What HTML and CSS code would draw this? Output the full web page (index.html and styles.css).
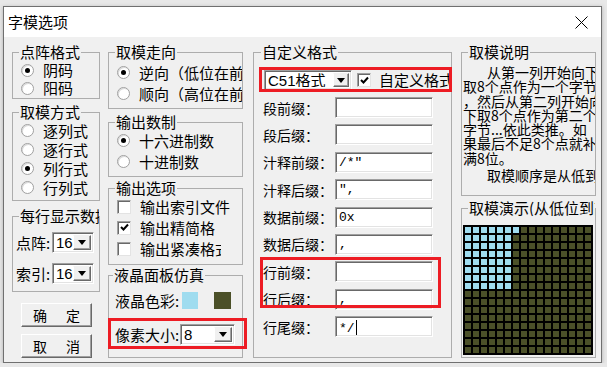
FILE: index.html
```html
<!DOCTYPE html>
<html lang="zh-CN">
<head>
    <meta charset="UTF-8">
    <meta name="viewport" content="width=device-width, initial-scale=1.0">
    <title>字模选项</title>
    <link rel="stylesheet" href="styles.css">
</head>
<body>

<div class="window">
    <div class="titlebar">
        <span class="title">字模选项</span>
        <svg class="close" width="13" height="13" viewBox="0 0 13 13">
            <path d="M0.5 0.5 L12.5 12.5 M12.5 0.5 L0.5 12.5" stroke="#000" stroke-width="1" fill="none"/>
        </svg>
    </div>

    <div class="client">

        <!-- left column -->
        <div class="col col1">
            <fieldset class="grp g-matrix">
                <legend>点阵格式</legend>
                <div class="opt"><span class="radio on"></span>阴码</div>
                <div class="opt"><span class="radio"></span>阳码</div>
            </fieldset>

            <fieldset class="grp g-mode">
                <legend>取模方式</legend>
                <div class="opt"><span class="radio"></span>逐列式</div>
                <div class="opt"><span class="radio"></span>逐行式</div>
                <div class="opt"><span class="radio on"></span>列行式</div>
                <div class="opt"><span class="radio"></span>行列式</div>
            </fieldset>

            <fieldset class="grp g-count">
                <legend class="clip">每行显示数据</legend>
                <div class="pick">
                    <span class="pick-label">点阵:</span>
                    <div class="combo c-num"><span class="val">16</span><span class="drop"></span></div>
                </div>
                <div class="pick">
                    <span class="pick-label">索引:</span>
                    <div class="combo c-num"><span class="val">16</span><span class="drop"></span></div>
                </div>
            </fieldset>

            <button class="btn btn-ok"><span>确</span><span>定</span></button>
            <button class="btn"><span>取</span><span>消</span></button>
        </div>

        <!-- second column -->
        <div class="col col2">
            <fieldset class="grp g-dir">
                <legend>取模走向</legend>
                <div class="opt cut-row"><span class="radio on"></span>逆向（低位在前）</div>
                <div class="opt cut-row"><span class="radio"></span>顺向（高位在前）</div>
            </fieldset>

            <fieldset class="grp g-base">
                <legend>输出数制</legend>
                <div class="opt"><span class="radio on"></span>十六进制数</div>
                <div class="opt"><span class="radio"></span>十进制数</div>
            </fieldset>

            <fieldset class="grp g-out">
                <legend>输出选项</legend>
                <div class="opt"><span class="check"></span>输出索引文件</div>
                <div class="opt"><span class="check on"><svg width="11" height="11" viewBox="0 0 11 11"><path d="M2 5 L4.5 7.5 L9 2.5" stroke="#000" stroke-width="2" fill="none"/></svg></span>输出精简格</div>
                <div class="opt"><span class="check"></span><span class="cut cut-compact">输出紧凑格式</span></div>
            </fieldset>

            <fieldset class="grp g-lcd">
                <legend>液晶面板仿真</legend>
                <div class="lcd-row">
                    <span class="lcd-label">液晶色彩:</span>
                    <span class="swatch sw-light"></span>
                    <span class="swatch sw-dark"></span>
                </div>
                <div class="lcd-row size-row mark mark-size">
                    <span class="size-label">像素大小:</span>
                    <div class="combo c-size"><span class="val">8</span><span class="drop"></span></div>
                </div>
            </fieldset>
        </div>

        <!-- custom format column -->
        <div class="col col3">
            <fieldset class="grp g-custom">
                <legend>自定义格式</legend>
                <div class="fmt-row mark mark-fmt">
                    <div class="combo c-fmt"><span class="val">C51格式</span><span class="drop"></span></div>
                    <span class="check on"><svg width="11" height="11" viewBox="0 0 11 11"><path d="M2 5 L4.5 7.5 L9 2.5" stroke="#000" stroke-width="2" fill="none"/></svg></span>
                    <span class="cut cut-custom">自定义格式</span>
                </div>

                <div class="fields">
                    <div class="frow"><span class="flabel">段前缀：</span><div class="field"></div></div>
                    <div class="frow"><span class="flabel">段后缀：</span><div class="field"></div></div>
                    <div class="frow"><span class="flabel">汁释前缀：</span><div class="field">/*"</div></div>
                    <div class="frow"><span class="flabel">汁释后缀：</span><div class="field">",</div></div>
                    <div class="frow"><span class="flabel">数据前缀：</span><div class="field">0x</div></div>
                    <div class="frow"><span class="flabel">数据后缀：</span><div class="field">,</div></div>
                    <div class="frow-pair mark mark-line">
                        <div class="frow"><span class="flabel">行前缀：</span><div class="field"></div></div>
                        <div class="frow"><span class="flabel">行后缀：</span><div class="field">,</div></div>
                    </div>
                    <div class="frow"><span class="flabel">行尾缀：</span><div class="field">*/<span class="caret"></span></div></div>
                </div>
            </fieldset>
        </div>

        <!-- right column -->
        <div class="col col4">
            <fieldset class="grp g-notes">
                <legend>取模说明</legend>
                <div class="notes">
                    <div class="ind">从第一列开始向下</div>
                    <div>取8个点作为一个字节</div>
                    <div>，然后从第二列开始向</div>
                    <div>下取8个点作为第二个</div>
                    <div>字节...依此类推。如</div>
                    <div>果最后不足8个点就补</div>
                    <div>满8位。</div>
                    <div class="ind p2">取模顺序是从低到高</div>
                </div>
            </fieldset>

            <fieldset class="grp g-demo">
                <legend class="clip">取模演示(从低位到高位)</legend>
                <div id="demoGrid" class="demo-grid"></div>
            </fieldset>
        </div>

    </div>
</div>

<script src="grid.js"></script>
</body>
</html>
```

FILE: styles.css
```css
* {
    box-sizing: border-box;
}
body {
    margin: 0;
    background: #e8e8e8;
    font-family: "Noto Sans CJK SC", "Liberation Sans", sans-serif;
    font-size: 15px;
    color: #000;
}

/* window frame */
.window {
    margin: 6px 0 0 3px;
    width: 599px;
    height: 357px;
    border: 1px solid #707070;
    background: #f0f0f0;
    display: flex;
    flex-direction: column;
    box-shadow: 0 1px 4px rgba(0, 0, 0, 0.25);
}
.titlebar {
    height: 30px;
    flex: none;
    background: #fff;
    display: flex;
    align-items: center;
    justify-content: space-between;
    padding: 0 13px 0 4px;
}
.title {
    font-size: 15px;
    line-height: 16px;
}
.close {
    display: block;
}
.client {
    flex: 1;
    display: flex;
    padding: 7px 0 5px 8px;
}
.col {
    display: flex;
    flex-direction: column;
}
.col1 {
    width: 88px;
    margin-right: 8px;
}
.col2 {
    width: 135px;
    margin-right: 10px;
}
.col3 {
    width: 199px;
    margin-right: 9px;
}
.col4 {
    width: 135px;
}

/* group boxes */
.grp {
    margin: 0;
    padding: 0 0 0 8px;
    border: 1px solid #adadad;
    min-width: 0;
}
.grp legend {
    padding: 0 1px;
    margin-left: -2px;
    font-size: 15px;
    line-height: 16px;
    white-space: nowrap;
}
.grp legend.clip {
    overflow: hidden;
}
.opt {
    display: flex;
    align-items: center;
    height: 21px;
    line-height: 16px;
    white-space: nowrap;
}
.cut-row {
    overflow: hidden;
}

/* left column */
.g-matrix {
    padding-top: 1px;
    padding-bottom: 1px;
}
.g-matrix .opt {
    height: 18px;
}
.g-mode {
    margin-top: 5px;
    padding-top: 1px;
    padding-bottom: 3px;
}
.g-mode .opt {
    height: 19px;
}
.g-count {
    margin-top: 7px;
    padding: 0 0 7px 3px;
}
.g-count legend {
    max-width: 80px;
    margin-left: 3px;
}
.pick {
    display: flex;
    align-items: center;
    margin-top: 8px;
}
.pick + .pick {
    margin-top: 10px;
}
.pick-label {
    width: 36px;
    line-height: 16px;
}
.btn {
    display: flex;
    justify-content: space-between;
    align-items: center;
    width: 71px;
    height: 24px;
    margin: 11px 0 0 9px;
    padding: 0 11px;
    background: #f0f0f0;
    border: 1px solid;
    border-color: #fff #696969 #696969 #fff;
    box-shadow: inset -1px -1px 0 #a0a0a0;
    font-family: "Noto Sans CJK SC", sans-serif;
    font-size: 14px;
    line-height: 16px;
    color: #000;
}
.btn + .btn {
    margin-top: 7px;
}

/* radios and checks */
.radio {
    flex: none;
    width: 13px;
    height: 13px;
    margin-right: 9px;
    border-radius: 50%;
    background: #fff;
    border: 1px solid #a0a0a0;
    box-shadow: inset 1px 1px 0 #dadada;
    display: flex;
    align-items: center;
    justify-content: center;
}
.radio.on::after {
    content: "";
    width: 5px;
    height: 5px;
    border-radius: 50%;
    background: #000;
}
.check {
    flex: none;
    width: 14px;
    height: 14px;
    margin-right: 9px;
    background: #fff;
    border: 1px solid;
    border-color: #a0a0a0 #e3e3e3 #e3e3e3 #a0a0a0;
    box-shadow: inset 1px 1px 0 #696969;
    display: flex;
    align-items: center;
    justify-content: center;
}
.check svg {
    display: block;
}
.cut {
    display: block;
    overflow: hidden;
    white-space: nowrap;
}
.cut-compact {
    width: 81px;
}

/* second column */
.g-dir {
    padding-top: 2px;
    padding-bottom: 4px;
}
.g-base {
    margin-top: 5px;
    padding-bottom: 4px;
}
.g-out {
    margin-top: 3px;
    padding-bottom: 5px;
}
.g-lcd {
    flex: 1;
    margin-top: 2px;
    padding-left: 6px;
}
.lcd-row {
    display: flex;
    align-items: center;
    height: 17px;
    margin-top: 9px;
    line-height: 16px;
}
.lcd-label {
    width: 67px;
    white-space: nowrap;
}
.swatch {
    width: 16px;
    height: 17px;
}
.sw-light {
    background: #9fdcef;
}
.sw-dark {
    margin-left: 16px;
    width: 17px;
    background: #4b5028;
}
.size-row {
    height: 21px;
    margin-top: 15px;
}
.size-label {
    width: 65px;
    white-space: nowrap;
}

/* combo boxes */
.combo {
    display: flex;
    height: 21px;
    padding: 2px;
    background: #fff;
    border: 1px solid;
    border-color: #a0a0a0 #fff #fff #a0a0a0;
    box-shadow: inset 1px 1px 0 #696969, inset -1px -1px 0 #e3e3e3;
}
.combo .val {
    flex: 1;
    padding-left: 1px;
    font-family: "Liberation Sans", "Noto Sans CJK SC", sans-serif;
    font-size: 15px;
    line-height: 15px;
    white-space: nowrap;
    overflow: hidden;
}
.combo .drop {
    flex: none;
    width: 18px;
    background: #f0f0f0;
    border: 1px solid;
    border-color: #f0f0f0 #696969 #696969 #fff;
    box-shadow: inset -1px -1px 0 #a0a0a0;
    display: flex;
    align-items: center;
    justify-content: center;
}
.combo .drop::after {
    content: "";
    border-left: 4px solid transparent;
    border-right: 4px solid transparent;
    border-top: 5px solid #000;
}
.c-num {
    width: 42px;
}
.c-size {
    width: 55px;
}
.c-fmt {
    width: 88px;
    height: 20px;
    margin-left: 1px;
}
.c-fmt .drop {
    width: 16px;
}

/* custom format column */
.g-custom {
    flex: 1;
    padding-left: 9px;
}
.fmt-row {
    display: flex;
    align-items: center;
    height: 20px;
    margin-top: 10px;
}
.fmt-row .check {
    margin: 0 8px 0 5px;
}
.cut-custom {
    width: 70px;
    line-height: 16px;
}
.fields {
    display: flex;
    flex-direction: column;
    gap: 6.4px;
    margin-top: 7px;
}
.frow-pair {
    display: flex;
    flex-direction: column;
    gap: 6.4px;
}
.frow {
    display: flex;
    align-items: center;
    height: 21px;
}
.flabel {
    width: 72px;
    font-size: 14px;
    line-height: 16px;
    white-space: nowrap;
}
.field {
    width: 98px;
    height: 21px;
    padding: 3px 0 0 3px;
    background: #fff;
    border: 1px solid;
    border-color: #a0a0a0 #fff #fff #a0a0a0;
    box-shadow: inset 1px 1px 0 #696969, inset -1px -1px 0 #e3e3e3;
    font-family: "Liberation Mono", monospace;
    font-size: 13px;
    line-height: 14px;
    white-space: pre;
}
.caret {
    display: inline-block;
    width: 1px;
    height: 15px;
    margin-left: 1px;
    vertical-align: -3px;
    background: #000;
}

/* red annotation frames */
.mark {
    position: relative;
}
.mark::after {
    content: "";
    position: absolute;
    border: 3px solid #ed1c24;
    pointer-events: none;
}
.mark-fmt::after {
    top: -3px;
    bottom: -2px;
    left: -4px;
    right: -1px;
}
.mark-line::after {
    top: -4px;
    bottom: 2px;
    left: -3px;
    right: 10px;
}
.mark-size::after {
    top: -6px;
    bottom: -4px;
    left: -7px;
    right: -5px;
}

/* right column */
.g-notes {
    padding: 0 0 0 1px;
}
.g-notes legend,
.g-demo legend {
    margin-left: 5px;
}
.notes {
    padding: 5px 0 13px 0;
    font-size: 14px;
    line-height: 14.3px;
    white-space: nowrap;
    overflow: hidden;
}
.notes .ind {
    padding-left: 24px;
}
.notes .p2 {
    margin-top: 3px;
}
.g-demo {
    flex: 1;
    margin-top: 4px;
    padding: 0 0 0 1px;
}
.g-demo legend {
    max-width: 127px;
}
.demo-grid {
    display: grid;
    grid-template-columns: repeat(16, 6px);
    grid-auto-rows: 6px;
    gap: 2px;
    width: 130px;
    padding: 2px;
    margin-top: 9px;
    background: #000;
}
.px {
    background: #4b5028;
}
.px.lit {
    background: #9fdcef;
}
```

FILE: grid.js
```js
// 16x16 preview, first columns already filled (low bit first)
var grid = document.getElementById('demoGrid');
for (var r = 0; r < 16; r++) {
    for (var c = 0; c < 16; c++) {
        var cell = document.createElement('div');
        cell.className = 'px';
        if (r < 8 && (c < 6 || (c == 6 && r == 0))) {
            cell.className += ' lit';
        }
        grid.appendChild(cell);
    }
}
```
